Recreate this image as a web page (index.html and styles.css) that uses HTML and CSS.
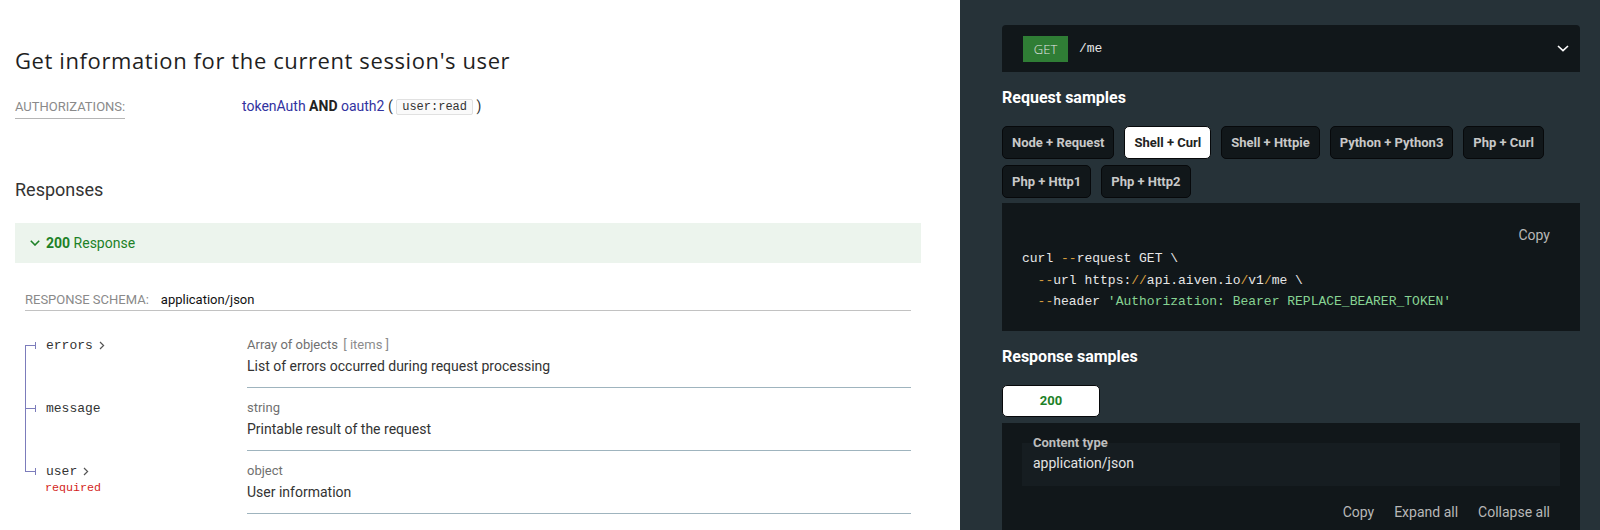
FILE: index.html
```html
<!DOCTYPE html>
<html lang="en">
<head>
<meta charset="utf-8">
<title>Get information for the current session's user</title>
<link rel="stylesheet" href="styles.css">
</head>
<body>
<div class="page">
  <main class="middle">
    <h2 class="op-title">Get information for the current session's user</h2>
    <div class="auth">
      <div class="auth-label-cell"><span class="auth-label">Authorizations:</span></div>
      <div class="auth-value"><span class="scheme">tokenAuth</span> <b>AND</b> <span class="scheme">oauth2</span> ( <code class="scope">user:read</code> )</div>
    </div>

    <h3 class="responses-title">Responses</h3>
    <div class="resp-bar">
      <svg class="resp-chevron" width="10" height="6" viewBox="0 0 10 6"><path d="M0.8 0.8 L5 5 L9.2 0.8" fill="none" stroke="#1d8127" stroke-width="1.6"/></svg>
      <strong>200</strong>&nbsp;Response
    </div>
    <div class="resp-body">
      <div class="schema-row"><span class="schema-label">Response Schema:</span><span class="schema-type">application/json</span></div>
      <div class="props">
        <div class="prop first">
          <div class="prop-name">
            <div class="name-line"><span class="bullet"></span><span class="pname">errors</span><svg class="shelf" width="6" height="9" viewBox="0 0 6 9"><path d="M1 1 L4.6 4.5 L1 8" fill="none" stroke="#555" stroke-width="1.2"/></svg></div>
          </div>
          <div class="prop-detail">
            <div class="ptype">Array of objects <span class="items">[ items ]</span></div>
            <div class="pdesc">List of errors occurred during request processing</div>
          </div>
        </div>
        <div class="prop">
          <div class="prop-name">
            <div class="name-line"><span class="bullet"></span><span class="pname">message</span></div>
          </div>
          <div class="prop-detail">
            <div class="ptype">string</div>
            <div class="pdesc">Printable result of the request</div>
          </div>
        </div>
        <div class="prop last">
          <div class="prop-name">
            <div class="name-line"><span class="bullet"></span><span class="pname">user</span><svg class="shelf" width="6" height="9" viewBox="0 0 6 9"><path d="M1 1 L4.6 4.5 L1 8" fill="none" stroke="#555" stroke-width="1.2"/></svg></div>
            <span class="required">required</span>
          </div>
          <div class="prop-detail">
            <div class="ptype">object</div>
            <div class="pdesc">User information</div>
          </div>
        </div>
      </div>
    </div>
  </main>

  <aside class="right">
    <div class="endpoint">
      <span class="method">GET</span>
      <span class="path">/me</span>
      <svg class="ep-chevron" width="12" height="7" viewBox="0 0 12 7"><path d="M1 1 L6 5.6 L11 1" fill="none" stroke="#fff" stroke-width="1.6"/></svg>
    </div>

    <h3 class="rp-title">Request samples</h3>
    <ul class="tabs">
      <li class="tab">Node + Request</li>
      <li class="tab active">Shell + Curl</li>
      <li class="tab">Shell + Httpie</li>
      <li class="tab">Python + Python3</li>
      <li class="tab">Php + Curl</li>
      <li class="tab">Php + Http1</li>
      <li class="tab">Php + Http2</li>
    </ul>
    <div class="code-block">
      <div class="code-actions"><span class="action">Copy</span></div>
      <div class="code">
        <div class="code-line">curl <span class="op">--</span>request GET \</div>
        <div class="code-line">  <span class="op">--</span>url https:<span class="op">//</span>api.aiven.io<span class="op">/</span>v1<span class="op">/</span>me \</div>
        <div class="code-line">  <span class="op">--</span>header <span class="str">'Authorization: Bearer REPLACE_BEARER_TOKEN'</span></div>
      </div>
    </div>

    <h3 class="rp-title rp-title-resp">Response samples</h3>
    <ul class="tabs">
      <li class="tab active resp-tab">200</li>
    </ul>
    <div class="resp-panel">
      <div class="ctype">
        <span class="ctype-label">Content type</span>
        <div class="ctype-value">application/json</div>
      </div>
      <div class="json-actions">
        <span class="action">Copy</span><span class="action">Expand all</span><span class="action">Collapse all</span>
      </div>
    </div>
  </aside>
</div>
</body>
</html>
```

FILE: styles.css
```css
* { box-sizing: border-box; }

html, body {
  margin: 0;
  padding: 0;
  height: 530px;
  overflow: hidden;
  background: #ffffff;
  font-family: Roboto, "Liberation Sans", sans-serif;
  font-size: 14px;
  color: #333333;
}

.page {
  display: flex;
  width: 1600px;
  height: 530px;
}

/* ---------- middle column ---------- */
.middle {
  width: 960px;
  flex: none;
  padding: 0 39px 0 15px;
}

.op-title {
  margin: 0;
  padding-top: 45px;
  font-family: "Open Sans", "DejaVu Sans", sans-serif;
  font-weight: 400;
  font-size: 22px;
  letter-spacing: 0.6px;
  line-height: 30px;
  color: #1f1f1f;
}

.auth {
  display: flex;
  margin-top: 21px;
  line-height: 20px;
}

.auth-label-cell {
  width: 227px;
  flex: none;
}

.auth-label {
  display: inline-block;
  text-transform: uppercase;
  font-size: 13px;
  color: #8a8a8a;
  padding-bottom: 1px;
  border-bottom: 1px solid #b5b5b5;
}

.auth-value {
  font-size: 14px;
  color: #333;
}

.scheme { color: #32329f; }
.auth-value b { font-weight: 700; color: #222; }

.scope {
  font-family: "Liberation Mono", "Courier New", monospace;
  font-size: 12px;
  line-height: 14px;
  display: inline-block;
  padding: 0 5px;
  border: 1px solid #e1e1e1;
  border-radius: 2px;
  background: #fafafa;
  color: #333;
  vertical-align: 1px;
}

.responses-title {
  margin: 59px 0 0;
  font-size: 18px;
  font-weight: 400;
  line-height: 24px;
  color: #333;
}

.resp-bar {
  margin-top: 21px;
  height: 40px;
  display: flex;
  align-items: center;
  padding-left: 15px;
  background: #ecf4ed;
  color: #1d8127;
  font-size: 14px;
}

.resp-chevron { margin-right: 6px; }
.resp-bar strong { font-weight: 700; }

.resp-body { padding: 0 10px; }

.schema-row {
  margin-top: 27px;
  line-height: 20px;
  border-bottom: 1px solid #c2c2c2;
  font-size: 13px;
}

.schema-label {
  text-transform: uppercase;
  color: #8a8a8a;
  margin-right: 12px;
}

.schema-type { color: #111; }

.props { margin-top: 14px; }

.prop { display: flex; }

.prop-name {
  width: 222px;
  flex: none;
  padding-top: 10px;
  background-image: linear-gradient(#7c7cbb, #7c7cbb);
  background-repeat: no-repeat;
  background-size: 1px 100%;
  background-position: 0 0;
}

.prop.first .prop-name { background-position: 0 20px; }
.prop.last .prop-name { background-size: 1px 21px; }

.name-line {
  display: flex;
  align-items: center;
  height: 20px;
}

.bullet {
  display: flex;
  align-items: center;
  margin-right: 10px;
}

.bullet::before {
  content: "";
  display: block;
  width: 10px;
  height: 1px;
  background: #7c7cbb;
}

.bullet::after {
  content: "";
  display: block;
  width: 1px;
  height: 7px;
  background: #7c7cbb;
}

.pname {
  font-family: "Liberation Mono", "Courier New", monospace;
  font-size: 13px;
  color: #333;
}

.shelf { margin-left: 6px; }

.required {
  display: block;
  margin-left: 20px;
  margin-top: 1px;
  font-family: "Liberation Mono", "Courier New", monospace;
  font-size: 11.7px;
  line-height: 12px;
  color: #d41f1c;
}

.prop-detail {
  flex: 1;
  padding: 10px 0;
  border-bottom: 1px solid #9fb4be;
}

.ptype {
  font-size: 13px;
  line-height: 20px;
  color: #707070;
}

.items { color: #8c8c8c; margin-left: 2px; }

.pdesc {
  font-size: 14px;
  line-height: 22px;
  color: #333;
}

/* ---------- right panel ---------- */
.right {
  width: 640px;
  flex: none;
  display: flex;
  flex-direction: column;
  background: #263238;
  padding: 25px 20px 0 42px;
  color: #ffffff;
}

.endpoint {
  height: 47px;
  flex: none;
  display: flex;
  align-items: center;
  padding: 0 11px 0 21px;
  background: #11171a;
  border-radius: 4px 4px 0 0;
}

.method {
  width: 45px;
  height: 26px;
  line-height: 26px;
  text-align: center;
  background: #2f7d35;
  color: #e4e4e4;
  font-family: "Open Sans", "DejaVu Sans", sans-serif;
  font-size: 13px;
  font-weight: 300;
}

.path {
  margin-left: 11px;
  font-family: "Liberation Mono", "Courier New", monospace;
  font-size: 13px;
  color: #e8e8e8;
  flex: 1;
}

.rp-title {
  margin: 16px 0 18px;
  font-size: 16px;
  line-height: 20px;
  font-weight: 700;
  color: #ffffff;
}

.rp-title-resp { margin-top: 16px; }

.tabs {
  list-style: none;
  margin: 0;
  padding: 0;
  display: flex;
  flex-wrap: wrap;
  column-gap: 10px;
  row-gap: 6px;
}

.tab {
  height: 33px;
  line-height: 31px;
  padding: 0 9px;
  min-width: 60px;
  text-align: center;
  background: #11171a;
  border: 1px solid #07090b;
  border-radius: 5px;
  color: #c8c8c8;
  font-size: 13px;
  font-weight: 700;
}

.tab.active {
  background: #ffffff;
  color: #222;
}

.resp-tab {
  width: 98px;
  height: 32px;
  line-height: 30px;
  color: #1d8127;
}

.tab.active.resp-tab { color: #1d8127; }

.code-block {
  margin-top: 5px;
  flex: none;
  background: #11171a;
  padding: 22px 20px 18px 20px;
}

.code-actions {
  display: flex;
  justify-content: flex-end;
  line-height: 20px;
}

.action {
  padding: 0 10px;
  font-size: 14px;
  color: #b8b8b8;
}

.code {
  margin-top: 3px;
  font-family: "Liberation Mono", "Courier New", monospace;
  font-size: 13px;
  color: #e6e6e6;
}

.code-line {
  white-space: pre;
  height: 21.5px;
  line-height: 21.5px;
}

.op { color: #d49d3e; }
.str { color: #87d393; }

.resp-panel {
  margin-top: 6px;
  flex: 1;
  background: #11171a;
  padding: 20px 20px 0 20px;
}

.ctype {
  background: #161d21;
  padding: 0 11px 13px 11px;
}

.ctype-label {
  display: block;
  position: relative;
  top: -7px;
  margin-bottom: -7px;
  font-size: 13px;
  font-weight: 700;
  line-height: 14px;
  color: #bdbdbd;
}

.ctype-value {
  margin-top: 3px;
  line-height: 20px;
  font-size: 14px;
  color: #e3e3e3;
}

.json-actions {
  display: flex;
  justify-content: flex-end;
  margin-top: 16px;
  line-height: 20px;
}
```
